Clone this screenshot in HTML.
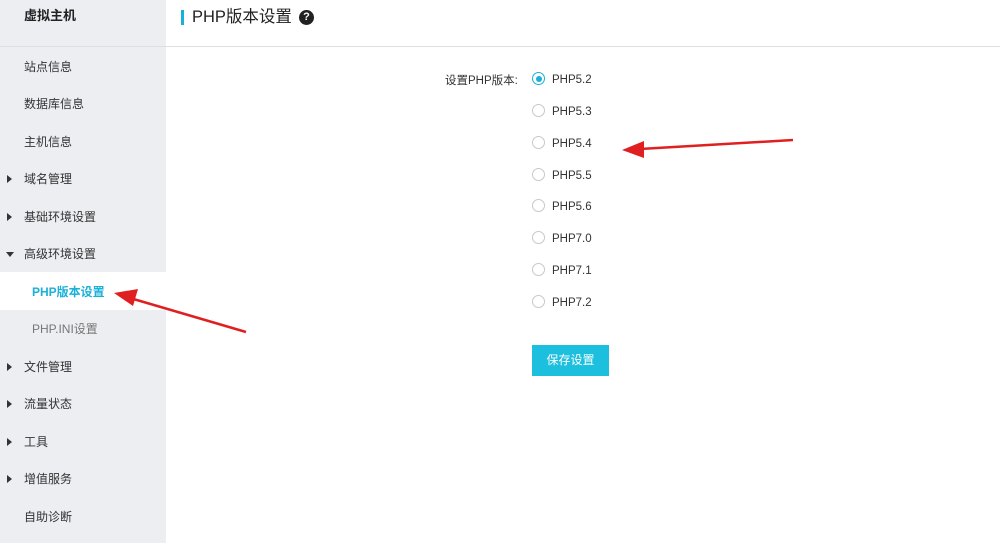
<!DOCTYPE html>
<html><head><meta charset="utf-8"><style>
*{margin:0;padding:0;box-sizing:border-box}
body{width:1000px;height:543px;overflow:hidden;background:#fff;font-family:"Liberation Sans","Noto Sans CJK SC",sans-serif;position:relative}
.side{position:absolute;left:0;top:0;width:166px;height:543px;background:#eceef2}
.line{position:absolute;left:0;top:46px;width:1000px;height:1px;background:#dcdfe4}
.it{position:absolute;left:24px;font-size:12px;color:#333;line-height:14px}
.tri{position:absolute;left:7px;width:0;height:0;border-top:4px solid transparent;border-bottom:4px solid transparent;border-left:5px solid #333}
.down{position:absolute;left:6px;border-left:4px solid transparent;border-right:4px solid transparent;border-top:5px solid #333;width:0;height:0}
.r{position:absolute;left:532px;width:13px;height:13px;border:1px solid #c8c8c8;border-radius:50%}
.lbl{position:absolute;left:552px;font-size:11.5px;color:#333;line-height:14px;margin-top:1px}
</style></head><body>
<div class="side"></div>
<div style="position:absolute;left:0;top:272px;width:166px;height:38px;background:#fff"></div>
<div class="line"></div>
<div class="it" style="top:9px;font-weight:bold;font-size:13px;color:#222">虚拟主机</div>
<div style="position:absolute;left:181px;top:10px;width:3px;height:15px;background:#1ab0d8"></div>
<div style="position:absolute;left:192px;top:7px;font-size:16.5px;color:#222;line-height:20px">PHP版本设置</div>
<div style="position:absolute;left:299px;top:10px;width:15px;height:15px;border-radius:50%;background:#222;color:#fff;font-size:11px;font-weight:bold;text-align:center;line-height:15px">?</div>
<div class="it" style="top:60px">站点信息</div>
<div class="it" style="top:97px">数据库信息</div>
<div class="it" style="top:135px">主机信息</div>
<div class="tri" style="top:175px"></div><div class="it" style="top:172px">域名管理</div>
<div class="tri" style="top:213px"></div><div class="it" style="top:210px">基础环境设置</div>
<div class="down" style="top:252px"></div><div class="it" style="top:247px">高级环境设置</div>
<div class="it" style="left:32px;top:285px;color:#1ab0d8;font-weight:bold">PHP版本设置</div>
<div class="it" style="left:32px;top:322px;color:#777">PHP.INI设置</div>
<div class="tri" style="top:363px"></div><div class="it" style="top:360px">文件管理</div>
<div class="tri" style="top:400px"></div><div class="it" style="top:397px">流量状态</div>
<div class="tri" style="top:438px"></div><div class="it" style="top:435px">工具</div>
<div class="tri" style="top:475px"></div><div class="it" style="top:472px">增值服务</div>
<div class="it" style="top:510px">自助诊断</div>
<div style="position:absolute;left:445px;top:72px;font-size:11.5px;color:#333">设置PHP版本:</div>
<div class="r" style="top:72px;border-color:#1ab0d8"><div style="position:absolute;left:2.5px;top:2.5px;width:6px;height:6px;border-radius:50%;background:#1ab0d8"></div></div>
<div class="lbl" style="top:72px">PHP5.2</div>
<div class="r" style="top:104px"></div><div class="lbl" style="top:104px">PHP5.3</div>
<div class="r" style="top:136px"></div><div class="lbl" style="top:136px">PHP5.4</div>
<div class="r" style="top:168px"></div><div class="lbl" style="top:168px">PHP5.5</div>
<div class="r" style="top:199px"></div><div class="lbl" style="top:199px">PHP5.6</div>
<div class="r" style="top:231px"></div><div class="lbl" style="top:231px">PHP7.0</div>
<div class="r" style="top:263px"></div><div class="lbl" style="top:263px">PHP7.1</div>
<div class="r" style="top:295px"></div><div class="lbl" style="top:295px">PHP7.2</div>
<div style="position:absolute;left:532px;top:345px;width:77px;height:31px;background:#1cc0de;color:#fff;font-size:12px;text-align:center;line-height:31px">保存设置</div>
<svg style="position:absolute;left:0;top:0" width="1000" height="543">
<line x1="793" y1="140" x2="640" y2="149" stroke="#e02020" stroke-width="2.5"/>
<polygon points="622,150 644,141 644,158" fill="#e02020"/>
<line x1="246" y1="332" x2="130" y2="298" stroke="#e02020" stroke-width="2.5"/>
<polygon points="114,293 138,289 133,306" fill="#e02020"/>
</svg>
</body></html>
